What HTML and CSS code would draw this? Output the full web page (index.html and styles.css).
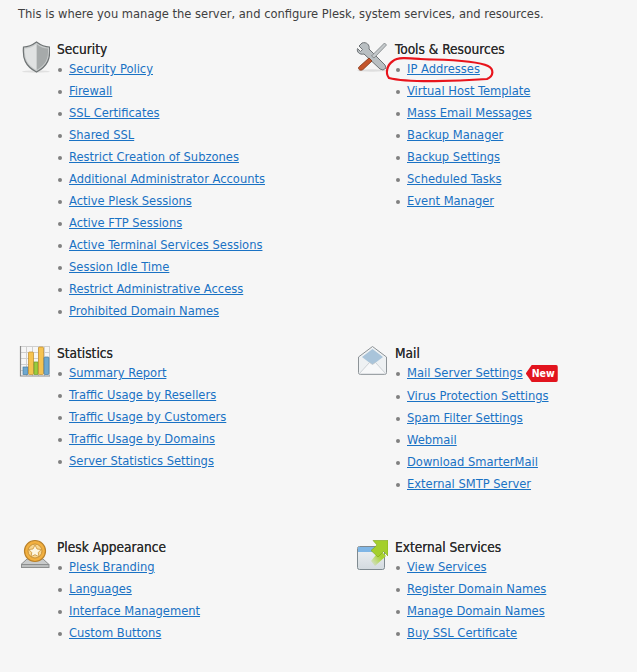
FILE: index.html
```html
<!DOCTYPE html>
<html lang="en">
<head>
<meta charset="utf-8">
<title>Server Administration</title>
<link rel="stylesheet" href="styles.css">
</head>
<body>
<p class="intro">This is where you manage the server, and configure Plesk, system services, and resources.</p>
<div class="grid">
  <section class="group row-a">
    <svg class="icon" viewBox="0 0 32 32"><ellipse cx="18" cy="30.500" rx="14" ry="1.200" fill="#e0e0e0"/><path d="M5.500 6C10 6 14.500 4 18.500 1 22.500 4 27 6 31.500 6 32.500 17 30 25 18.500 31 7 25 4.500 17 5.500 6Z" fill="#c9cccc" stroke="#6f7475" stroke-width="1.200"/><path d="M18.500 3C22 6 26 7.500 30 7.500 30.500 17 28 24 18.500 29Z" fill="#a6aaaa"/><path d="M7 7.500C11 7.500 15 6 18.500 3V29C9 24 6.500 17 7 7.500Z" fill="#e0e2e2"/></svg>
    <div class="body">
      <h2>Security</h2>
      <ul>
        <li><a href="#">Security Policy</a></li>
        <li><a href="#">Firewall</a></li>
        <li><a href="#">SSL Certificates</a></li>
        <li><a href="#">Shared SSL</a></li>
        <li><a href="#">Restrict Creation of Subzones</a></li>
        <li><a href="#">Additional Administrator Accounts</a></li>
        <li><a href="#">Active Plesk Sessions</a></li>
        <li><a href="#">Active FTP Sessions</a></li>
        <li><a href="#">Active Terminal Services Sessions</a></li>
        <li><a href="#">Session Idle Time</a></li>
        <li><a href="#">Restrict Administrative Access</a></li>
        <li><a href="#">Prohibited Domain Names</a></li>
      </ul>
    </div>
  </section>
  <section class="group row-a">
    <svg class="icon" viewBox="0 0 32 32"><ellipse cx="16" cy="29.500" rx="15" ry="1.200" fill="#dedede"/><path d="M6 2 3 5 6.500 8.500 4.500 10.500 1.500 7.500C.5 11 3.500 14 8 13L24 28 27 29 30 27 29 24 13 8C14 4 10.500 .5 6 2Z" fill="#b9bfc2" stroke="#6e7376"/><path d="M28.500 2 30.500 4 18 17 15.500 15Z" fill="#c4c9cb" stroke="#7a7f82" stroke-width=".8"/><path d="M13 17 16 20 7 28.500C5 30 2.500 29 2.500 27 2.500 26 3.500 25.500 4 25Z" fill="#c4552c" stroke="#7e3518" stroke-width=".8"/></svg>
    <div class="body">
      <h2>Tools &amp; Resources</h2>
      <ul>
        <li><a href="#">IP Addresses</a></li>
        <li><a href="#">Virtual Host Template</a></li>
        <li><a href="#">Mass Email Messages</a></li>
        <li><a href="#">Backup Manager</a></li>
        <li><a href="#">Backup Settings</a></li>
        <li><a href="#">Scheduled Tasks</a></li>
        <li><a href="#">Event Manager</a></li>
      </ul>
    </div>
  </section>
  <section class="group row-b">
    <svg class="icon" viewBox="0 0 32 32"><path d="M2 1.500H32M2 7.500H32M2 13.500H32M2 19.500H32M2 25.500H32M8.500 1V31M14.500 1V31M20.500 1V31M26.500 1V31M31.500 1V31" stroke="#cfcfcf" fill="none"/><path d="M2.500 1V31H32" stroke="#8a8a8a" fill="none" stroke-width="1.200"/><rect x="5" y="22" width="5" height="7.500" fill="#6fa8cf" stroke="#47799c" stroke-width=".7"/><rect x="10.500" y="7" width="5" height="22.500" rx="1" fill="#f6c350" stroke="#c08a25" stroke-width=".7"/><rect x="16" y="17" width="4" height="12.500" fill="#9acb3c" stroke="#6d962a" stroke-width=".7"/><rect x="20.500" y="2" width="5" height="27.500" rx="1" fill="#f6c350" stroke="#c08a25" stroke-width=".7"/><rect x="26" y="12" width="5" height="17.500" rx="1" fill="#6fa8cf" stroke="#47799c" stroke-width=".7"/></svg>
    <div class="body">
      <h2>Statistics</h2>
      <ul>
        <li><a href="#">Summary Report</a></li>
        <li><a href="#">Traffic Usage by Resellers</a></li>
        <li><a href="#">Traffic Usage by Customers</a></li>
        <li><a href="#">Traffic Usage by Domains</a></li>
        <li><a href="#">Server Statistics Settings</a></li>
      </ul>
    </div>
  </section>
  <section class="group row-b">
    <svg class="icon" viewBox="0 0 32 32"><path d="M2.500 12 16.500 1.500 30.500 12V27.500Q30.500 29.500 28.500 29.500H4.500Q2.500 29.500 2.500 27.500Z" fill="#eef1f3" stroke="#8d9397"/><path d="M6 12 16.500 4 27 12 16.500 20Z" fill="#a9c4da"/><path d="M3 29 13.500 17.500 16.500 19.500 19.500 17.500 30 29Z" fill="#f7f8f9" stroke="#bcc2c6" stroke-width=".7"/></svg>
    <div class="body">
      <h2>Mail</h2>
      <ul>
        <li class="badged"><a href="#">Mail Server Settings</a><span class="badge">New</span></li>
        <li><a href="#">Virus Protection Settings</a></li>
        <li><a href="#">Spam Filter Settings</a></li>
        <li><a href="#">Webmail</a></li>
        <li><a href="#">Download SmarterMail</a></li>
        <li><a href="#">External SMTP Server</a></li>
      </ul>
    </div>
  </section>
  <section class="group">
    <svg class="icon" viewBox="0 0 32 32"><path d="M3 25.500 9 20H25L31 25.500Z" fill="#c9cbcb" stroke="#8d8f8f"/><rect x="3.500" y="25.500" width="27.500" height="3" fill="#bcbebe" stroke="#8d8f8f"/><circle cx="17" cy="12" r="10.500" fill="#f2b040" stroke="#b9812a" stroke-width="1.200"/><circle cx="17" cy="12" r="7" fill="#f8d690" stroke="#c99236"/><path d="M17 6 19 10 23.300 10.500 20.200 13.500 21 17.800 17 15.700 13 17.800 13.800 13.500 10.700 10.500 15 10Z" fill="#fdf6e2" stroke="#c99236" stroke-width=".8"/></svg>
    <div class="body">
      <h2>Plesk Appearance</h2>
      <ul>
        <li><a href="#">Plesk Branding</a></li>
        <li><a href="#">Languages</a></li>
        <li><a href="#">Interface Management</a></li>
        <li><a href="#">Custom Buttons</a></li>
      </ul>
    </div>
  </section>
  <section class="group">
    <svg class="icon" viewBox="0 0 32 32"><defs><linearGradient id="tail" x1="0" y1="1" x2="1" y2="0"><stop offset="0" stop-color="#a8d331" stop-opacity="0"/><stop offset=".6" stop-color="#a8d331"/></linearGradient><linearGradient id="pane" x1="0" y1="0" x2="0" y2="1"><stop offset="0" stop-color="#f0f3f5"/><stop offset="1" stop-color="#d3dadf"/></linearGradient></defs><rect x="1.500" y="7.500" width="27" height="23" rx="2" fill="url(#pane)" stroke="#7f8a90"/><rect x="2" y="8" width="26" height="5" fill="#7fb6e6"/><path d="M15 22 24 11 30 17 19 27Z" fill="url(#tail)"/><path d="M17 1.500H32V17L27.500 12.500 22 18 15 11.500 21 6Z" fill="#a4cf2c" stroke="#7ea31c" stroke-width=".6"/></svg>
    <div class="body">
      <h2>External Services</h2>
      <ul>
        <li><a href="#">View Services</a></li>
        <li><a href="#">Register Domain Names</a></li>
        <li><a href="#">Manage Domain Names</a></li>
        <li><a href="#">Buy SSL Certificate</a></li>
      </ul>
    </div>
  </section>
</div>
<svg class="scribble" viewBox="0 0 110 28"><path d="M9 6C3 10 1 18 5 23 24 28 75 26 103 24 110 21 110 14 104 11 90 4 50 5 36 4 24 3 13 2 9 6Z" fill="none" stroke="#e8141c" stroke-width="2.200"/></svg>
</body>
</html>
```
FILE: styles.css
```css
html, body {
  margin: 0;
  background: #f6f6f6;
}
body {
  position: relative;
  height: 672px;
  overflow: hidden;
  padding: 0 18px;
  box-sizing: border-box;
  font-family: "DejaVu Sans Condensed", "DejaVu Sans", sans-serif;
  font-size: 12.8px;
  color: #404040;
}
.intro {
  margin: 0;
  padding-top: 6px;
  line-height: 16px;
}
.grid {
  display: grid;
  grid-template-columns: 338px 1fr;
  padding-top: 19px;
}
.group {
  display: flex;
  align-items: flex-start;
}
.row-a { height: 304px; }
.row-b { height: 194px; }
.icon {
  flex: none;
  width: 32px;
  height: 32px;
  margin-right: 7px;
}
.body {
  flex: 1;
}
h2 {
  margin: 0 0 1px;
  font-size: 13.6px;
  font-weight: normal;
  line-height: 16px;
  color: #2a2a2a;
  text-shadow: 0 0 .5px #444;
}
ul {
  margin: 0;
  padding: 0;
  list-style: none;
}
li {
  position: relative;
  height: 22px;
  line-height: 16px;
  padding: 3px 0 3px 12px;
  box-sizing: border-box;
}
li::before {
  content: "";
  position: absolute;
  left: 1px;
  top: 10px;
  width: 4px;
  height: 4px;
  border-radius: 50%;
  background: #808080;
}
li.badged {
  height: 23px;
}
a {
  color: #1a72c4;
}
.badge {
  display: inline-block;
  margin-left: 3px;
  padding: 0 3px 0 6px;
  height: 17px;
  line-height: 16px;
  vertical-align: top;
  font-size: 10.5px;
  font-weight: bold;
  color: #fff;
  background: #e2141e;
  border-radius: 2px;
  clip-path: polygon(6px 0, 100% 0, 100% 100%, 6px 100%, 0 50%);
}
.scribble {
  position: absolute;
  left: 384px;
  top: 55px;
  width: 110px;
  height: 28px;
}
```
